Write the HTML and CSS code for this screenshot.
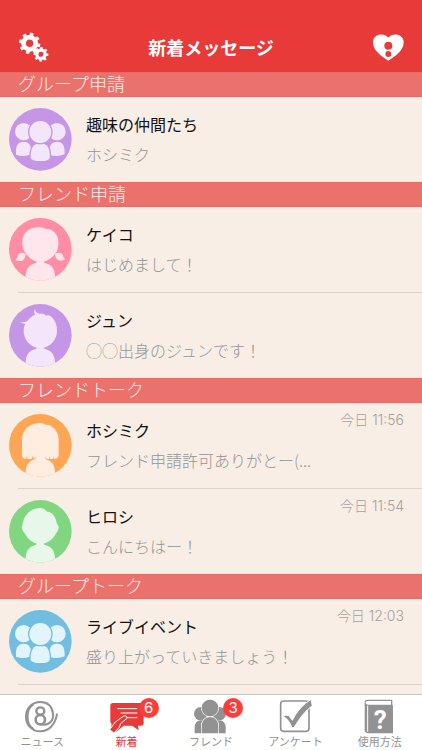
FILE: index.html
```html
<!DOCTYPE html>
<html lang="ja">
<head>
<meta charset="utf-8">
<meta name="viewport" content="width=device-width, initial-scale=1">
<title>新着メッセージ</title>
<link rel="stylesheet" href="styles.css">
</head>
<body>
<svg class="defs" aria-hidden="true">
  <defs>
    <clipPath id="disc"><circle cx="122" cy="133" r="94"/></clipPath>
    <g id="group">
      <circle cx="72" cy="110" r="26"/>
      <path d="M49 174C48 152 55 140 72 140S96 152 95 178Q72 188 49 179Z"/>
      <circle cx="172" cy="110" r="26"/>
      <path d="M149 178C148 152 155 140 172 140S196 152 195 178Q172 188 149 179Z"/>
      <g class="front">
        <path d="M93 188C92 160 101 145 122 145S152 160 150 188Q149 198 122 198T93 188Z"/>
        <circle cx="122" cy="111" r="33"/>
      </g>
    </g>
    <path id="shoulders" d="M78 232V212C79 190 90 178 108 174Q113 173 113 165H131Q131 173 136 174C154 178 165 190 166 212V232Z" clip-path="url(#disc)"/>
    <g id="gear-big">
      <circle cx="90" cy="127" r="18" fill="none" stroke="currentColor" stroke-width="14"/>
      <path id="tooth" d="M84 105L85 95H95L96 105Z"/>
      <use href="#tooth" transform="rotate(45 90 127)"/>
      <use href="#tooth" transform="rotate(90 90 127)"/>
      <use href="#tooth" transform="rotate(135 90 127)"/>
      <use href="#tooth" transform="rotate(180 90 127)"/>
      <use href="#tooth" transform="rotate(225 90 127)"/>
      <use href="#tooth" transform="rotate(270 90 127)"/>
      <use href="#tooth" transform="rotate(315 90 127)"/>
    </g>
  </defs>
</svg>

<header class="header">
  <button class="icon-button" type="button" aria-label="設定">
    <svg class="gears" viewBox="55 93 93 93" fill="currentColor">
      <use href="#gear-big" transform="rotate(12 90 127)"/>
      <use href="#gear-big" transform="translate(124 160) scale(.69) rotate(4) translate(-90 -127)"/>
    </svg>
  </button>
  <h1 class="title">新着メッセージ</h1>
  <button class="icon-button" type="button" aria-label="お気に入り">
    <svg class="heart" viewBox="485 93 93 93">
      <path fill="currentColor" d="M531 179C507 164 485 148 485 124C485 99 518 94 531 110C544 94 577 99 577 124C577 148 555 164 531 179Z"/>
      <g fill="#e83a38"><circle cx="531" cy="134" r="12"/><circle cx="531" cy="159" r="9"/></g>
    </svg>
  </button>
</header>

<main class="content">
  <section>
    <h2 class="section-title">グループ申請</h2>
    <ul class="list">
      <li><a class="entry" href="#">
        <svg class="avatar purple" viewBox="28 39 189 189"><circle class="disc" cx="122" cy="133" r="94"/><use href="#group"/></svg>
        <span class="text"><strong class="name">趣味の仲間たち</strong><span class="message">ホシミク</span></span>
      </a></li>
    </ul>
  </section>

  <section>
    <h2 class="section-title">フレンド申請</h2>
    <ul class="list">
      <li><a class="entry" href="#">
        <svg class="avatar pink" viewBox="28 39 189 189"><circle class="disc" cx="122" cy="133" r="94"/><use href="#shoulders"/>
          <path d="M122 172C105 171 89 160 79 146C66 132 66 108 70 96C77 77 96 66 121 66Q132 67 139 72Q154 70 164 82C175 91 177 105 176 119C175 132 173 139 166 146C156 160 140 171 122 172Z"/>
          <path d="M78 147Q65 139 56 148Q55 157 47 165Q57 170 68 167Q77 162 78 147ZM166 147Q179 139 188 148Q189 157 197 163Q187 169 176 166Q167 161 166 147Z"/>
        </svg>
        <span class="text"><strong class="name">ケイコ</strong><span class="message">はじめまして！</span></span>
      </a></li>
      <li><a class="entry" href="#">
        <svg class="avatar purple" viewBox="28 39 189 189"><circle class="disc" cx="122" cy="133" r="94"/><use href="#shoulders"/>
          <path d="M122 172C91 170 72 145 72 119C72 110 74 104 77 99Q69 98 61 93Q74 95 83 90Q92 76 107 71Q100 65 106 55Q107 65 119 68Q133 66 139 74Q149 70 156 78Q172 94 172 119C172 145 153 170 122 172Z"/>
        </svg>
        <span class="text"><strong class="name">ジュン</strong><span class="message">◯◯出身のジュンです！</span></span>
      </a></li>
    </ul>
  </section>

  <section>
    <h2 class="section-title">フレンドトーク</h2>
    <ul class="list">
      <li><a class="entry" href="#">
        <svg class="avatar orange" viewBox="28 39 189 189"><circle class="disc" cx="122" cy="133" r="94"/><use href="#shoulders"/>
          <path d="M67 162V116C67 85 91 67 120 66Q132 66 139 72Q149 70 157 77Q177 90 177 116V162Q177 173 163 173L160 165L161 174L152 174L148 164L149 174L140 173L136 166L138 174H106L109 165L102 174L97 164L96 174L84 174L82 164L80 174Q67 172 67 162Z"/>
        </svg>
        <span class="text"><strong class="name">ホシミク</strong><span class="message">フレンド申請許可ありがとー(...</span></span>
        <time class="time">今日 11:56</time>
      </a></li>
      <li><a class="entry" href="#">
        <svg class="avatar green" viewBox="28 39 189 189"><circle class="disc" cx="122" cy="133" r="94"/><use href="#shoulders"/>
          <path d="M122 172C102 171 84 157 77 142Q67 131 66 121Q70 108 73 95C83 75 101 63 122 63Q134 64 143 74Q157 74 164 88Q170 99 171 108Q178 116 177 123Q176 132 168 141C160 157 142 171 122 172Z"/>
        </svg>
        <span class="text"><strong class="name">ヒロシ</strong><span class="message">こんにちはー！</span></span>
        <time class="time">今日 11:54</time>
      </a></li>
    </ul>
  </section>

  <section>
    <h2 class="section-title">グループトーク</h2>
    <ul class="list list-open">
      <li><a class="entry" href="#">
        <svg class="avatar blue" viewBox="28 39 189 189"><circle class="disc" cx="122" cy="133" r="94"/><use href="#group"/></svg>
        <span class="text"><strong class="name">ライブイベント</strong><span class="message">盛り上がっていきましょう！</span></span>
        <time class="time">今日 12:03</time>
      </a></li>
    </ul>
  </section>
</main>

<nav class="tabs">
  <a class="tab" href="#">
    <svg class="tab-icon" viewBox="72 60 108 102" fill="none" stroke="currentColor">
      <path stroke-width="6" d="M121 133C151 139 161 119 159 101C156 79 142 66 121 66C96 66 78 85 78 110S96 154 121 154C148 154 167 131 171 101"/>
      <path stroke-width="5" d="M101 73C77 88 77 132 101 147"/>
      <ellipse stroke-width="7" cx="121" cy="93" rx="12" ry="11"/>
      <ellipse stroke-width="8" cx="121" cy="119" rx="14" ry="14"/>
    </svg>
    <span>ニュース</span>
  </a>
  <a class="tab active" href="#" aria-current="page">
    <svg class="tab-icon" viewBox="326 60 108 102">
      <path fill="currentColor" d="M338 69H422Q430 69 430 77V129Q430 137 422 137H413L415 151L395 137H370L347 156L331 147L334 132L330 126V77Q330 69 338 69Z"/>
      <path fill="none" stroke="#fff" stroke-width="3" d="M351 86H411M361 99H411M378 113H411"/>
      <path fill="currentColor" stroke="#fff" stroke-width="3" d="M328 149L345 126L370 108Q378 105 380 112Q380 116 374 120L361 130L357 142L341 159Z"/>
    </svg>
    <span>新着</span>
    <span class="badge">6</span>
  </a>
  <a class="tab" href="#">
    <svg class="tab-icon friends" viewBox="156 60 108 102" fill="currentColor">
      <circle cx="179" cy="101" r="20"/><circle cx="235" cy="101" r="20"/>
      <path d="M161 160V144Q161 121 180 121H234Q254 121 254 144V160Z"/>
      <path class="gap" d="M182 160V141Q182 113 207 111Q232 113 232 141V160Z"/>
      <ellipse class="gap" cx="207" cy="84" rx="25" ry="25"/>
    </svg>
    <span>フレンド</span>
    <span class="badge">3</span>
  </a>
  <a class="tab" href="#">
    <svg class="tab-icon" viewBox="-14 60 108 102">
      <rect x="-3" y="63" width="85" height="91" rx="9" fill="none" stroke="currentColor" stroke-width="5"/>
      <path fill="currentColor" stroke="#fff" stroke-width="3" d="M3 108Q14 103 22 107L32 121Q51 81 88 58L92 77Q62 99 37 143H31Q22 118 3 108Z"/>
    </svg>
    <span>アンケート</span>
  </a>
  <a class="tab" href="#">
    <svg class="tab-icon" viewBox="239 60 108 102">
      <path fill="currentColor" d="M254 59H330V76H332V160H257Q247 158 247 150V67Q247 60 254 59Z"/>
      <path fill="none" stroke="#fff" stroke-width="3" d="M256 77V155"/>
      <path fill="#fff" d="M254 63H326V74H257Q250 73 250 68Q251 64 254 63Z"/>
      <text class="question" x="294" y="148" text-anchor="middle">?</text>
    </svg>
    <span>使用方法</span>
  </a>
</nav>
</body>
</html>
```
FILE: styles.css
```css
* { box-sizing: border-box; }

body {
  margin: 0;
  min-height: 100vh;
  display: flex;
  flex-direction: column;
  background: #f8eee5;
  color: #111;
  font-family: "Noto Sans CJK JP", sans-serif;
}

a { color: inherit; text-decoration: none; }
.defs { position: absolute; width: 0; height: 0; }

.header {
  position: sticky;
  top: 0;
  z-index: 1;
  display: flex;
  align-items: center;
  justify-content: space-between;
  padding: 22px 18px 0;
  background: #e83a38;
  color: #fff;
}
.title { margin: 0; font-size: 18px; line-height: 50px; font-weight: 700; }
.icon-button {
  display: flex;
  padding: 0;
  border: 0;
  background: none;
  color: inherit;
}
.gears, .heart { width: 31px; height: 31px; }

.content { flex: 1; }
.section-title {
  margin: 0;
  padding: 0 18px 2px;
  border: solid #e86a65;
  border-width: 1px 0;
  background: #eb716c;
  color: #fdeae6;
  font-size: 18px;
  line-height: 21px;
  font-weight: 300;
}

.list { margin: 0; padding: 0; list-style: none; }
.list li + li::before,
.list-open::after {
  content: "";
  display: block;
  height: 1px;
  margin-left: 18px;
  background: #ddd3ce;
}
.entry {
  display: flex;
  align-items: flex-start;
  gap: 14px;
  padding: 11px 18px 11px 9px;
}
.avatar { flex: none; width: 63px; height: 63px; }
.text { flex: 1; min-width: 0; padding-top: 1px; }
.name, .message {
  display: block;
  font-size: 16px;
  line-height: 30px;
  font-weight: 400;
  white-space: nowrap;
}
.message { color: #959595; font-weight: 300; }
.time {
  width: 0;
  display: flex;
  justify-content: flex-end;
  white-space: nowrap;
  color: #a5a09c;
  font-family: Inter, "Noto Sans CJK JP", sans-serif;
  font-size: 14px;
  line-height: 12px;
  font-weight: 300;
}

.avatar { fill: var(--figure); }
.disc { fill: var(--disc); }
.front { stroke: var(--disc); stroke-width: 8px; paint-order: stroke; }
.purple { --disc: #c596e6; --figure: #f3e6fa; }
.pink { --disc: #ff8da4; --figure: #ffe6ec; }
.orange { --disc: #ffa654; --figure: #ffede0; }
.green { --disc: #82d681; --figure: #e7f7e9; }
.blue { --disc: #72bee1; --figure: #e4f4fc; }

.tabs {
  position: sticky;
  bottom: 0;
  display: flex;
  border-top: 1px solid #ccc6c0;
  background: #fff;
}
.tab {
  position: relative;
  flex: 1 1 0;
  display: flex;
  flex-direction: column;
  align-items: center;
  padding: 5px 0 1px;
  color: #929292;
  font-size: 11px;
  line-height: 15px;
}
.tab.active { color: #e83a38; }
.tab-icon { width: 36px; height: 34px; overflow: visible; }
.gap { stroke: #fff; stroke-width: 4px; paint-order: stroke; }
.question { fill: #fff; font: 700 78px/1 Roboto, sans-serif; }
.badge {
  position: absolute;
  top: 3px;
  left: calc(50% + 12px);
  width: 20px;
  height: 20px;
  border-radius: 50%;
  background: #fc3d39;
  color: #fff;
  font: 400 15px/20px Inter, sans-serif;
  text-align: center;
}
```
